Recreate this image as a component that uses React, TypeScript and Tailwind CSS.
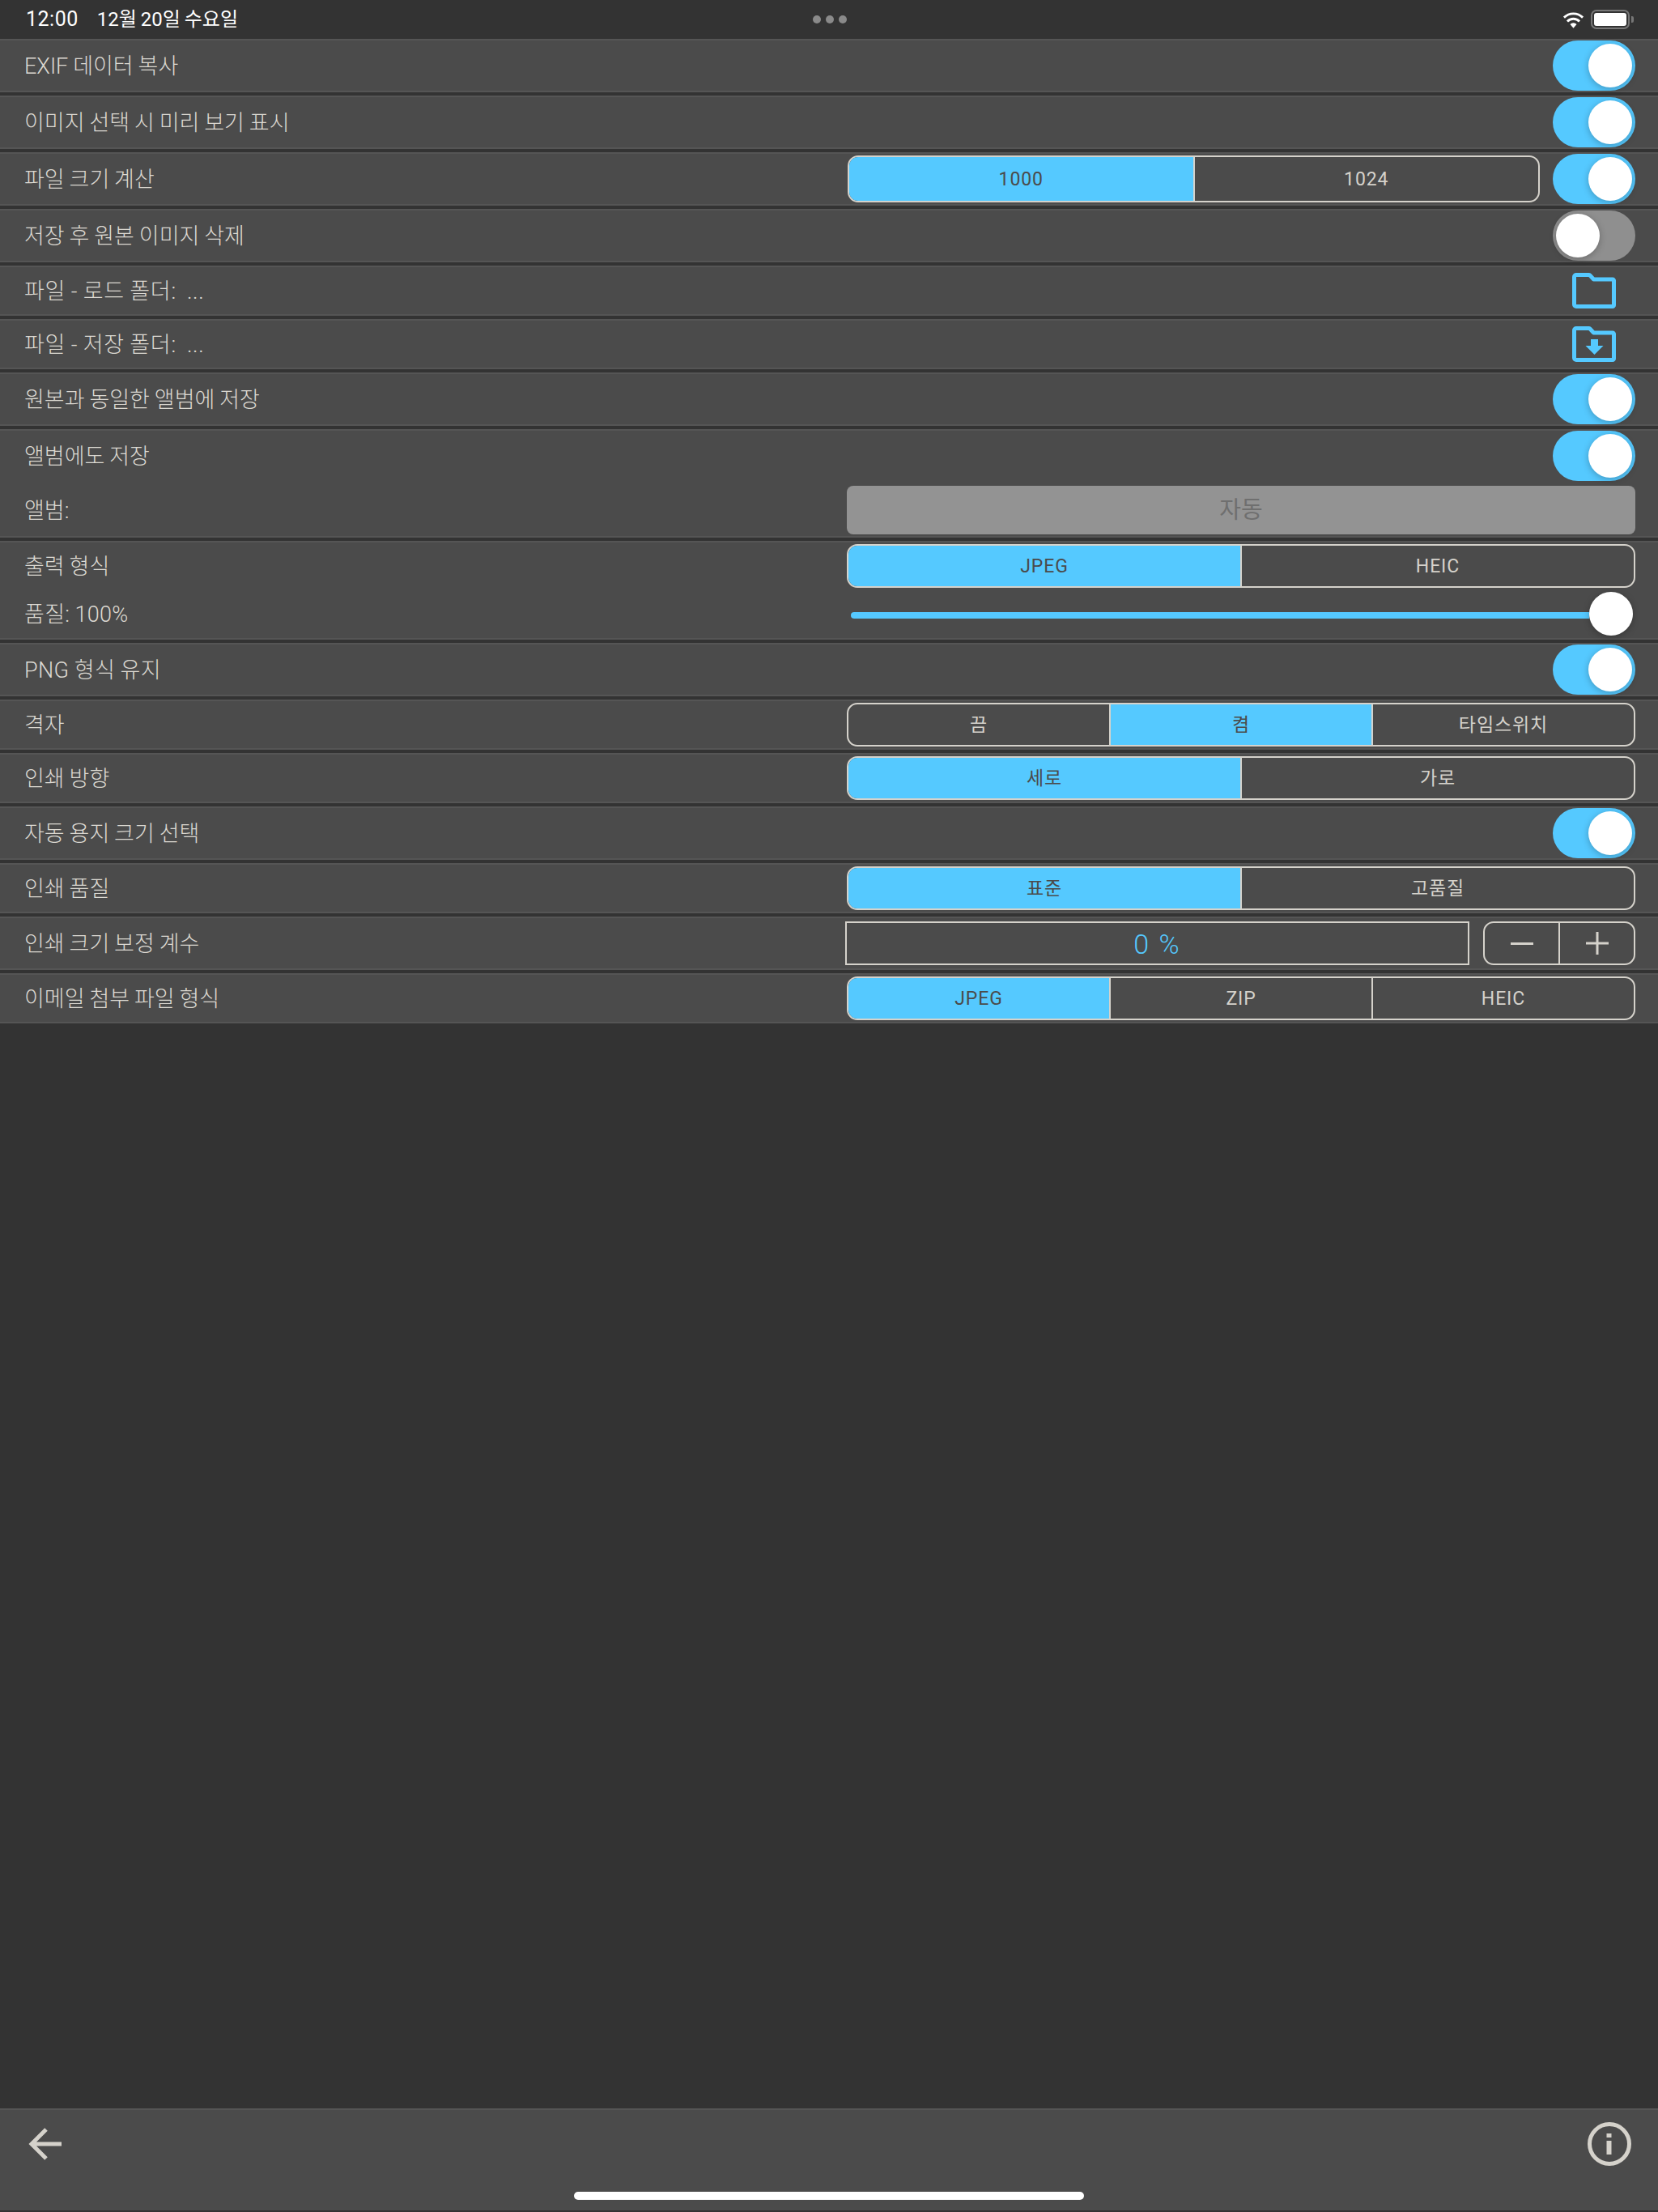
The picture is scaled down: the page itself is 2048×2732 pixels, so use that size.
import type { ReactNode } from "react";

const FONT = "[font-family:'Roboto','Noto_Sans_CJK_KR',sans-serif]";
const LABEL = "whitespace-pre pt-[3px] text-[27px] font-light text-[#dcd9d2] [word-spacing:-0.7px]";

function Toggle({ on = true }: { on?: boolean }) {
  return (
    <div
      className={`flex h-[62px] w-[102px] shrink-0 items-center rounded-full ${
        on ? "justify-end bg-[#55c9ff] pr-[4px]" : "justify-start bg-[#8f8f8f] pl-[4px]"
      }`}
    >
      <div className="h-[54px] w-[54px] rounded-full bg-white shadow-[0_2px_8px_rgba(0,0,0,0.25)]" />
    </div>
  );
}

function Segment({ options, active, className }: { options: string[]; active: number; className: string }) {
  return (
    <div className={`flex overflow-hidden rounded-[13px] border-2 border-[#d5d2cb] ${className}`}>
      {options.map((o, i) => (
        <div
          key={o}
          className={`flex flex-1 items-center justify-center pt-[2px] text-[23px] tracking-[0.9px] ${
            i > 0 ? "border-l-2 border-[#d5d2cb]" : ""
          } ${i === active ? "bg-[#55c9ff] text-[#4b4b4b]" : "text-[#d5d2cb]"}`}
        >
          {o}
        </div>
      ))}
    </div>
  );
}

function Row({ label, height, labelClass = "", children }: { label: string; height: string; labelClass?: string; children?: ReactNode }) {
  return (
    <div className={`flex items-center justify-between border-y-2 border-[#555555] bg-[#4b4b4b] pl-[30px] pr-[28px] ${height}`}>
      <span className={`${LABEL} ${labelClass}`}>{label}</span>
      {children}
    </div>
  );
}

function FolderIcon({ save }: { save?: boolean }) {
  return (
    <svg width="54" height="44" viewBox="0 0 54 44" className="mr-[24px]">
      <path
        d="M5 2.500h15.500a2 2 0 0 1 1.400.6l4.600 4.900H50a1.500 1.500 0 0 1 1.500 1.500V40a1.500 1.500 0 0 1-1.500 1.500H5A2.500 2.500 0 0 1 2.500 39V5A2.500 2.500 0 0 1 5 2.500Z"
        fill="none"
        stroke="#55c9ff"
        strokeWidth="5"
        strokeLinejoin="round"
      />
      {save && <path d="M23 16h9v8h6.500L27.500 35 16.500 24H23Z" fill="#55c9ff" />}
    </svg>
  );
}

export default function App() {
  return (
    <div className={`flex h-[2732px] w-[2048px] flex-col overflow-hidden bg-[#333333] ${FONT}`}>
      {/* status bar */}
      <div className="flex h-[48px] items-center justify-between pl-[32px] pr-[30px] text-white">
        <div className="flex w-[400px] items-center gap-[23px]">
          <span className="text-[25px] tracking-[0.5px]">12:00</span>
          <span className="text-[24px] [word-spacing:-1px]">12월 20일 수요일</span>
        </div>
        <div className="flex gap-[6px]">
          <div className="h-[10px] w-[10px] rounded-full bg-[#8a8a8a]" />
          <div className="h-[10px] w-[10px] rounded-full bg-[#8a8a8a]" />
          <div className="h-[10px] w-[10px] rounded-full bg-[#8a8a8a]" />
        </div>
        <div className="flex w-[400px] items-center justify-end gap-[8px]">
          <svg width="27" height="21" viewBox="0 0 28 21">
            <path d="M14 21l-4.200-4.800a6 6 0 0 1 8.400 0Z" fill="#fff" />
            <path d="M6.200 12.500a11 11 0 0 1 15.600 0" fill="none" stroke="#fff" strokeWidth="3" />
            <path d="M2 7.500a17 17 0 0 1 24 0" fill="none" stroke="#fff" strokeWidth="3" />
          </svg>
          <div className="flex items-center">
            <div className="h-[24px] w-[48px] rounded-[7px] border-2 border-[#777777] p-[2px]">
              <div className="h-full w-full rounded-[3px] bg-white" />
            </div>
            <div className="ml-[2px] h-[8px] w-[3px] rounded-r-[2px] bg-[#777777]" />
          </div>
        </div>
      </div>

      {/* settings list */}
      <div className="flex flex-col gap-[4px]">
        <Row label="EXIF 데이터 복사" height="h-[66px]">
          <Toggle />
        </Row>
        <Row label="이미지 선택 시 미리 보기 표시" height="h-[66px]">
          <Toggle />
        </Row>
        <Row label="파일 크기 계산" height="h-[66px]">
          <div className="flex items-center gap-[16px]">
            <Segment options={["1000", "1024"]} active={0} className="h-[58px] w-[855px]" />
            <Toggle />
          </div>
        </Row>
        <Row label="저장 후 원본 이미지 삭제" height="h-[66px]">
          <Toggle on={false} />
        </Row>
        <Row label="파일 - 로드 폴더:  ..." height="h-[62px]" labelClass="tracking-[0.7px]">
          <FolderIcon />
        </Row>
        <Row label="파일 - 저장 폴더:  ..." height="h-[62px]" labelClass="tracking-[0.7px]">
          <FolderIcon save />
        </Row>
        <Row label="원본과 동일한 앨범에 저장" height="h-[66px]">
          <Toggle />
        </Row>

        <div className="flex h-[134px] flex-col gap-[6px] border-y-2 border-[#555555] bg-[#4b4b4b] pl-[30px] pr-[28px]">
          <div className="flex h-[62px] items-center justify-between">
            <span className={LABEL}>앨범에도 저장</span>
            <Toggle />
          </div>
          <div className="flex h-[60px] items-center justify-between">
            <span className={LABEL}>앨범:</span>
            <div className="flex h-[60px] w-[974px] items-center justify-center rounded-[8px] bg-[#939393] pt-[2px] text-[29px] text-[#6f6f6f]">
              자동
            </div>
          </div>
        </div>

        <div className="flex h-[122px] flex-col border-y-2 border-[#555555] bg-[#4b4b4b] pl-[30px] pr-[28px]">
          <div className="flex h-[58px] items-center justify-between">
            <span className={LABEL}>출력 형식</span>
            <Segment options={["JPEG", "HEIC"]} active={0} className="h-[54px] w-[974px]" />
          </div>
          <div className="flex h-[60px] items-center justify-between">
            <span className={`${LABEL} tracking-[0.3px]`}>품질: 100%</span>
            <div className="flex w-[974px] items-center pl-[5px] pr-[3px]">
              <div className="mt-[4px] h-[8px] flex-1 rounded-l-full bg-[#55c9ff]" />
              <div className="h-[54px] w-[54px] rounded-full bg-white shadow-[0_2px_8px_rgba(0,0,0,0.25)]" />
            </div>
          </div>
        </div>

        <Row label="PNG 형식 유지" height="h-[66px]" labelClass="tracking-[0.4px]">
          <Toggle />
        </Row>
        <Row label="격자" height="h-[62px]">
          <Segment options={["끔", "켬", "타임스위치"]} active={1} className="h-[54px] w-[974px]" />
        </Row>
        <Row label="인쇄 방향" height="h-[62px]">
          <Segment options={["세로", "가로"]} active={0} className="h-[54px] w-[974px]" />
        </Row>
        <Row label="자동 용지 크기 선택" height="h-[66px]">
          <Toggle />
        </Row>
        <Row label="인쇄 품질" height="h-[62px]">
          <Segment options={["표준", "고품질"]} active={0} className="h-[54px] w-[974px]" />
        </Row>
        <Row label="인쇄 크기 보정 계수" height="h-[66px]">
          <div className="flex w-[976px] items-center justify-between">
            <div className="flex h-[54px] w-[771px] items-center justify-center border-2 border-[#d5d2cb] pt-[2px] text-[34px] font-light tracking-[2px] text-[#55c9ff]">
              0 %
            </div>
            <div className="flex h-[54px] w-[188px] rounded-[13px] border-2 border-[#d5d2cb]">
              <div className="flex flex-1 items-center justify-center">
                <div className="h-[3px] w-[28px] bg-[#d5d2cb]" />
              </div>
              <div className="flex flex-1 items-center justify-center border-l-2 border-[#d5d2cb]">
                <svg width="30" height="30" viewBox="0 0 30 30">
                  <path d="M15 1v28M1 15h28" stroke="#d5d2cb" strokeWidth="3" />
                </svg>
              </div>
            </div>
          </div>
        </Row>
        <Row label="이메일 첨부 파일 형식" height="h-[62px]">
          <Segment options={["JPEG", "ZIP", "HEIC"]} active={0} className="h-[54px] w-[974px]" />
        </Row>
      </div>

      <div className="flex-1" />

      {/* bottom toolbar */}
      <div className="relative mb-[2px] flex h-[126px] items-start justify-between border-t-2 border-[#555555] bg-[#4b4b4b] pl-[35px] pr-[33px] pt-[15px]">
        <svg width="42" height="42" viewBox="0 0 42 42" className="mt-[6px]">
          <path d="M41 21H4M22 3 4 21l18 18" fill="none" stroke="#d5d2cb" strokeWidth="5" />
        </svg>
        <svg width="54" height="54" viewBox="0 0 54 54">
          <circle cx="27" cy="27" r="24.500" fill="none" stroke="#d5d2cb" strokeWidth="5" />
          <path d="M23.500 14h6v5h-6ZM23.500 23h6v17h-6Z" fill="#d5d2cb" />
        </svg>
        <div className="absolute bottom-[13px] left-[709px] h-[10px] w-[630px] rounded-full bg-white" />
      </div>
    </div>
  );
}
